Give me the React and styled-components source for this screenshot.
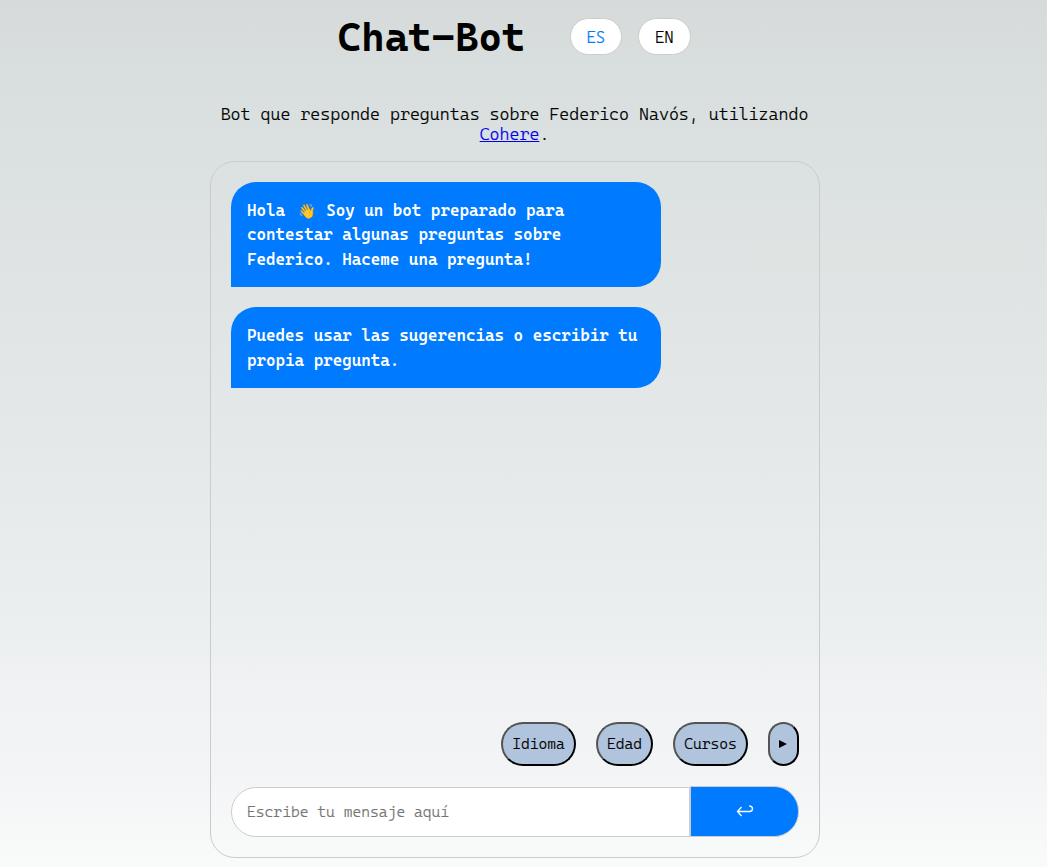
import React from "react";
import styled, { createGlobalStyle } from "styled-components";

const mono = `"Cascadia Mono", "DejaVu Sans Mono", monospace`;

const Global = createGlobalStyle`
  * { box-sizing: border-box; }
  html, body { margin: 0; height: 100%; }
  body {
    font-family: ${mono};
    font-weight: 350;
    color: #000;
    overflow: hidden;
  }
`;

const Page = styled.main`
  height: 867px;
  padding-right: 17px;
  display: flex;
  flex-direction: column;
  align-items: center;
  background: linear-gradient(180deg, #d6dada 0%, #d9dfde 9%, #e4e8e8 50%, #ebefef 73%, #f1f2f4 80%, #f3f4f6 89%, #f8faf9 98%, #f9fbfa 100%);
`;

const Header = styled.header`
  display: flex;
  align-items: flex-start;
  height: 104px;
  padding-top: 18px;
`;

const Title = styled.h1`
  margin: 0 45px 0 0;
  font-size: 40px;
  line-height: 38px;
  font-weight: 700;
`;

const LangButton = styled.button`
  width: ${(p) => p.$width}px;
  height: 37px;
  margin-right: ${(p) => p.$gap || 0}px;
  padding: 2px 1px 0 0;
  border: 1px solid #ccc;
  border-radius: 20px;
  background: #fff;
  color: ${(p) => (p.$active ? "#007bff" : "#000")};
  font: 350 16px/33px ${mono};
  -webkit-text-stroke: 0.2px currentColor;
`;

const Intro = styled.p`
  width: 610px;
  height: 57px;
  margin: 0;
  padding-right: 1px;
  text-align: center;
  font-size: 17px;
  line-height: 20px;
  -webkit-text-stroke: 0.2px currentColor;
`;

const Link = styled.a`
  color: #0000ee;
  text-decoration: underline;
`;

const Chat = styled.section`
  width: 610px;
  height: 697px;
  padding: 20px;
  border: 1px solid #c9cccc;
  border-radius: 25px;
  display: flex;
  flex-direction: column;
`;

const Messages = styled.div`
  flex: 1;
  display: flex;
  flex-direction: column;
  gap: 20px;
`;

const Bubble = styled.div`
  width: 430px;
  height: ${(p) => p.$height}px;
  padding: 17px 0 0 16px;
  border-radius: 25px 25px 25px 0;
  background: #007bff;
  color: #fff;
  font-size: 16.25px;
  line-height: ${(p) => p.$leading}px;
  font-weight: 600;
  white-space: pre;
`;

const Emoji = styled.span`
  display: inline-block;
  width: 22px;
  height: 18px;
  padding-left: 3px;
  line-height: 16px;
  font-size: 14.5px;
  text-align: center;
  font-family: "Noto Color Emoji", sans-serif;
`;

const Suggestions = styled.div`
  display: flex;
  justify-content: flex-end;
  gap: 20px;
  margin-bottom: 20px;
`;

const Chip = styled.button`
  width: ${(p) => p.$width}px;
  height: 44px;
  padding: 0;
  border: 2px outset #000;
  border-radius: 25px;
  background: #b0c4de;
  color: #000;
  display: flex;
  align-items: center;
  justify-content: center;
  font: 350 15px ${mono};
  -webkit-text-stroke: 0.2px currentColor;
`;

const Form = styled.form`
  display: flex;
  align-items: flex-end;
  height: 51px;
`;

const Input = styled.input`
  width: 459px;
  height: 50px;
  padding: 0 15px;
  border: 1px solid #ccc;
  border-radius: 25px 0 0 25px;
  background: #fff;
  font: 350 15px ${mono};
  &::placeholder {
    color: #757575;
    -webkit-text-stroke: 0.2px #757575;
  }
`;

const Send = styled.button`
  width: 109px;
  height: 51px;
  padding: 0 0 2px;
  border: 1px solid #ccc;
  border-radius: 0 25px 25px 0;
  background: #007bff;
  display: flex;
  align-items: center;
  justify-content: center;
`;

export default function App() {
  return (
    <Page>
      <Global />
      <Header>
        <Title>Chat-Bot</Title>
        <LangButton $width={52} $gap={16} $active>ES</LangButton>
        <LangButton $width={53} $gap={1}>EN</LangButton>
      </Header>
      <Intro>
        Bot que responde preguntas sobre Federico Navós, utilizando <Link href="#">Cohere</Link>.
      </Intro>
      <Chat>
        <Messages>
          <Bubble $height={105} $leading={24.4}>
            Hola <Emoji>👋</Emoji> Soy un bot preparado para{"\n"}contestar algunas preguntas sobre{"\n"}Federico. Haceme una pregunta!
          </Bubble>
          <Bubble $height={81} $leading={24.5}>Puedes usar las sugerencias o escribir tu{"\n"}propia pregunta.</Bubble>
        </Messages>
        <Suggestions>
          <Chip $width={75}>Idioma</Chip>
          <Chip $width={57}>Edad</Chip>
          <Chip $width={75}>Cursos</Chip>
          <Chip $width={31} aria-label="Más">
            <svg width="9" height="8" viewBox="0 0 9 8"><path d="M0 0L8 4L0 8Z" fill="#000" /></svg>
          </Chip>
        </Suggestions>
        <Form>
          <Input placeholder="Escribe tu mensaje aquí" />
          <Send type="button" aria-label="Enviar">
            <svg width="18" height="14" viewBox="0 0 18 14" fill="none" stroke="#fff" strokeWidth="1.3">
              <path d="M5.5 3L1.5 7.5L5.5 12M1.7 7.5H13.5C15.4 7.5 16.5 6.4 16.5 4.7C16.5 3 15.4 2 13.2 2" />
            </svg>
          </Send>
        </Form>
      </Chat>
    </Page>
  );
}
